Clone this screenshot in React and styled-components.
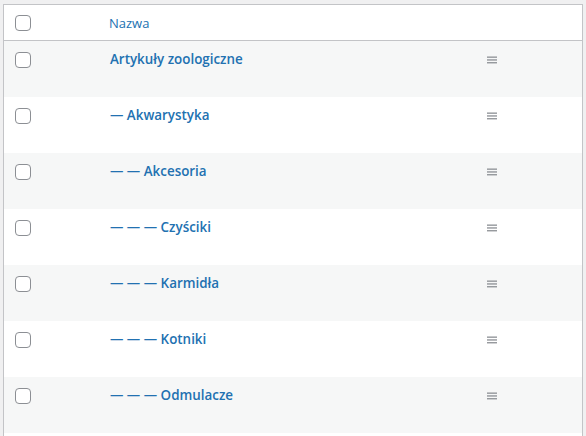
import React from "react";
import styled, { createGlobalStyle } from "styled-components";

const Global = createGlobalStyle`
  html, body { margin: 0; padding: 0; background: #f0f0f1; }
  body { font-family: "Open Sans", "Noto Sans", sans-serif; }
`;

const Page = styled.div`
  padding: 4px 3px 0 3px;
  width: 586px;
  height: 436px;
  box-sizing: border-box;
  overflow: hidden;
`;

const Table = styled.div`
  width: 580px;
  border: 1px solid #c3c4c7;
  border-bottom: none;
  background: #fff;
  box-sizing: border-box;
`;

const Row = styled.div`
  display: grid;
  grid-template-columns: 106px 1fr 100px 40px;
  height: ${(p) => (p.$header ? "35px" : "56px")};
  background: ${(p) => (p.$alt ? "#f6f7f7" : "#fff")};
  border-bottom: ${(p) => (p.$header ? "1px solid #c3c4c7" : "none")};
`;

const CheckCell = styled.div`
  padding: ${(p) => (p.$header ? "10px" : "11px")} 0 0 11px;
`;

const Box = styled.span`
  display: block;
  width: 16px;
  height: 16px;
  box-sizing: border-box;
  border: 1px solid #8c8f94;
  border-radius: 4px;
  background: #fff;
`;

const HeadLabel = styled.div`
  padding-top: 9px;
  margin-left: -1px;
  font-size: 13px;
  line-height: 18px;
  color: #2271b1;
`;

const Title = styled.div`
  padding-top: 9px;
  font-size: 13.4px;
  font-weight: 600;
  line-height: 18px;
  color: #2271b1;
  white-space: nowrap;
`;

const HandleCell = styled.div`
  display: flex;
  justify-content: center;
  padding-top: 15px;
`;

const Filler = styled.div`
  height: 20px;
  background: #fff;
`;

const Handle = () => (
  <svg width="10" height="8" viewBox="0 0 10 8">
    <rect x="0" y="0.5" width="10" height="1.3" fill="#8c8f94" />
    <rect x="0" y="3.3" width="10" height="1.3" fill="#8c8f94" />
    <rect x="0" y="6.1" width="10" height="1.3" fill="#8c8f94" />
  </svg>
);

const items = [
  "Artykuły zoologiczne",
  "— Akwarystyka",
  "— — Akcesoria",
  "— — — Czyściki",
  "— — — Karmidła",
  "— — — Kotniki",
  "— — — Odmulacze",
];

export default function App() {
  return (
    <>
      <Global />
      <Page>
        <Table>
          <Row $header>
            <CheckCell $header>
              <Box />
            </CheckCell>
            <HeadLabel>Nazwa</HeadLabel>
            <div />
            <div />
          </Row>
          {items.map((t, i) => (
            <Row key={t} $alt={i % 2 === 0}>
              <CheckCell>
                <Box />
              </CheckCell>
              <Title>{t}</Title>
              <HandleCell>
                <Handle />
              </HandleCell>
              <div />
            </Row>
          ))}
          <Filler />
        </Table>
      </Page>
    </>
  );
}
